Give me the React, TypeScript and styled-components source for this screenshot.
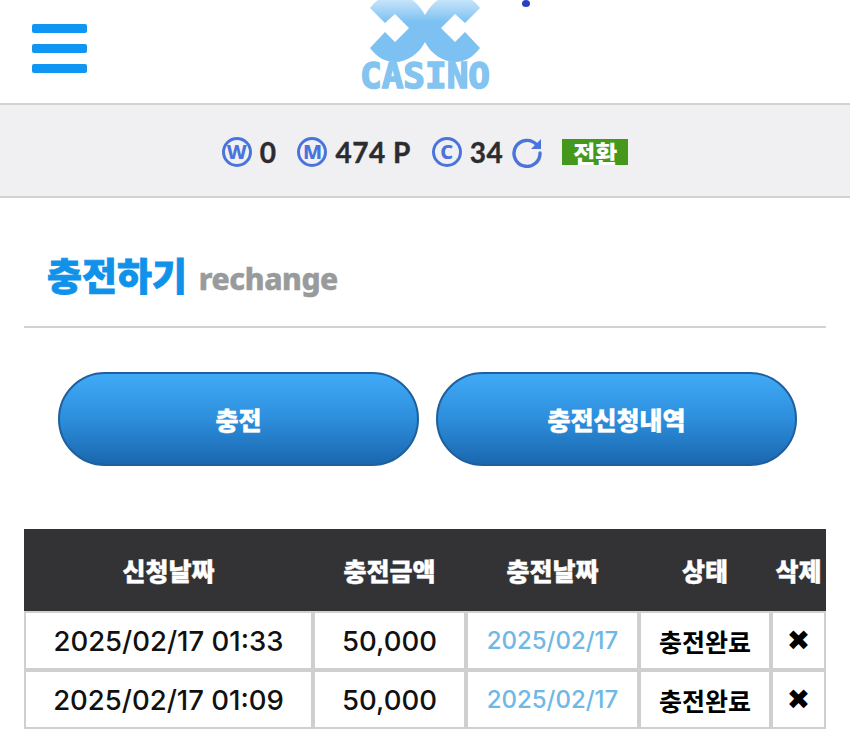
import React, { FC } from 'react'
import styled, { createGlobalStyle } from 'styled-components'

const KR = `"Noto Sans CJK KR", "Noto Sans", sans-serif`

const rows = [
    { requested: '2025/02/17 01:33', amount: '50,000', charged: '2025/02/17', status: '충전완료' },
    { requested: '2025/02/17 01:09', amount: '50,000', charged: '2025/02/17', status: '충전완료' },
]

const App: FC = () => {
    return (
        <Page>
            <GlobalStyle />
            <Header>
                <Burger>
                    <span />
                    <span />
                    <span />
                </Burger>
                <Logo>
                    <LogoMark viewBox="0 0 130 62">
                        <defs>
                            <linearGradient id="logoFill" gradientUnits="userSpaceOnUse" x1="0" y1="0" x2="0" y2="22">
                                <stop offset="0" stopColor="#c6e4fa" />
                                <stop offset="1" stopColor="#7cc1f1" />
                            </linearGradient>
                        </defs>
                        <path
                            id="logoHalf"
                            fill="url(#logoFill)"
                            d="M65 15C71 3 83 -6 95 -6C105 -6 113 -1 120 8L105 23L95 14L81 28L95 42L105 32L120 48C113 57 105 62 95 62C83 62 71 54 65 42Z"
                        />
                        <use href="#logoHalf" transform="matrix(-1 0 0 1 130 0)" />
                    </LogoMark>
                    <LogoText>CASINO</LogoText>
                </Logo>
                <Dot />
            </Header>

            <StatsBar>
                <Coin>W</Coin>
                <StatValue>0</StatValue>
                <Coin $gap={21}>M</Coin>
                <StatValue>474 P</StatValue>
                <Coin $gap={21}>C</Coin>
                <StatValue>34</StatValue>
                <RefreshIcon viewBox="0 0 32 32">
                    <path d="M25.5 8.5A13 13 0 1 0 29 17" fill="none" stroke="#4a74dc" strokeWidth="3.4" strokeLinecap="round" />
                    <path d="M30 3V13H20Z" fill="#4a74dc" />
                </RefreshIcon>
                <SwitchButton>전환</SwitchButton>
            </StatsBar>

            <TitleRow>
                <Title>충전하기</Title>
                <SubTitle>rechange</SubTitle>
            </TitleRow>

            <Tabs>
                <TabButton>충전</TabButton>
                <TabButton>충전신청내역</TabButton>
            </Tabs>

            <HistoryTable>
                <colgroup>
                    <col width={289} />
                    <col width={153} />
                    <col width={173} />
                    <col width={132} />
                    <col width={55} />
                </colgroup>
                <thead>
                    <tr>
                        <HeadCell>신청날짜</HeadCell>
                        <HeadCell>충전금액</HeadCell>
                        <HeadCell>충전날짜</HeadCell>
                        <HeadCell>상태</HeadCell>
                        <HeadCell>삭제</HeadCell>
                    </tr>
                </thead>
                <tbody>
                    {rows.map((row) => (
                        <tr key={row.requested}>
                            <Cell>{row.requested}</Cell>
                            <Cell>{row.amount}</Cell>
                            <DateCell>{row.charged}</DateCell>
                            <StatusCell>{row.status}</StatusCell>
                            <DeleteCell>✖</DeleteCell>
                        </tr>
                    ))}
                </tbody>
            </HistoryTable>
        </Page>
    )
}

export default App

const GlobalStyle = createGlobalStyle`
    html, body {
        margin: 0;
        padding: 0;
        background: #fff;
    }
`

const Page = styled.div`
    position: relative;
    width: 850px;
    height: 730px;
    overflow: hidden;
    background: #fff;
    font-family: ${KR};
`

const Header = styled.header`
    position: relative;
    display: flex;
    justify-content: center;
    box-sizing: border-box;
    height: 105px;
    border-bottom: 2px solid #d2d2d2;
`

const Burger = styled.div`
    position: absolute;
    left: 32px;
    top: 24px;
    display: flex;
    flex-direction: column;
    gap: 11px;
    width: 55px;

    span {
        display: block;
        height: 9px;
        border-radius: 2px;
        background: #0e96f2;
    }
`

const Logo = styled.div`
    display: flex;
    flex-direction: column;
    align-items: center;
    width: 130px;
`

const LogoMark = styled.svg`
    display: block;
    width: 130px;
    height: 62px;
`

const LogoText = styled.span`
    font-family: "DejaVu Sans Mono", monospace;
    font-weight: 700;
    font-size: 36px;
    line-height: 28px;
    color: #84c4f0;
    -webkit-text-stroke: 1.6px #84c4f0;
`

const Dot = styled.i`
    position: absolute;
    left: 522px;
    top: 0;
    width: 8px;
    height: 7px;
    border-radius: 50%;
    background: #2a3fc8;
`

const StatsBar = styled.div`
    display: flex;
    align-items: center;
    justify-content: center;
    box-sizing: border-box;
    height: 93px;
    padding-top: 3px;
    background: #f0f0f2;
    border-bottom: 2px solid #d2d2d2;
`

const Coin = styled.span<{ $gap?: number }>`
    display: flex;
    align-items: center;
    justify-content: center;
    box-sizing: border-box;
    width: 30px;
    height: 30px;
    margin-left: ${(p) => p.$gap ?? 0}px;
    margin-right: 8px;
    border: 3px solid #4a74dc;
    border-radius: 50%;
    color: #4a74dc;
    font-family: "Noto Sans", sans-serif;
    font-size: 20px;
    font-weight: 800;
    line-height: 1;
`

const StatValue = styled.span`
    font-family: Lato, "Noto Sans", sans-serif;
    font-size: 28px;
    font-weight: 700;
    letter-spacing: 0.5px;
    line-height: 1;
    color: #2c2c30;
    -webkit-text-stroke: 0.4px #2c2c30;
`

const RefreshIcon = styled.svg`
    width: 32px;
    height: 32px;
    margin-left: 8px;
`

const SwitchButton = styled.span`
    display: flex;
    align-items: center;
    justify-content: center;
    width: 66px;
    height: 26px;
    margin-left: 19px;
    padding-top: 1px;
    box-sizing: border-box;
    background: #46981c;
    color: #fff;
    font-size: 24px;
    font-weight: 900;
    line-height: 1;
`

const TitleRow = styled.div`
    display: flex;
    align-items: baseline;
    gap: 12px;
    box-sizing: border-box;
    height: 130px;
    margin: 0 24px;
    padding: 52px 0 0 23px;
    border-bottom: 2px solid #d2d2d2;
`

const Title = styled.h1`
    margin: 0;
    color: #1192ea;
    font-size: 38px;
    font-weight: 900;
    line-height: 48px;
    -webkit-text-stroke: 0.8px #1192ea;
`

const SubTitle = styled.span`
    color: #999a9c;
    font-family: "Noto Sans", sans-serif;
    font-size: 30px;
    font-weight: 800;
    letter-spacing: -0.4px;
    line-height: 48px;
    -webkit-text-stroke: 0.5px #999a9c;
`

const Tabs = styled.div`
    display: flex;
    gap: 17px;
    margin-top: 44px;
    padding-left: 58px;
`

const TabButton = styled.button`
    box-sizing: border-box;
    width: 361px;
    height: 94px;
    padding: 0;
    border: 2px solid #1e5f9e;
    border-radius: 47px;
    background: linear-gradient(180deg, #40aaf7 0%, #2d8edc 50%, #1a67ae 100%);
    color: #fff;
    font-family: ${KR};
    font-size: 25px;
    font-weight: 900;
    -webkit-text-stroke: 0.4px #fff;
`

const HistoryTable = styled.table`
    width: 802px;
    margin: 63px 0 0 24px;
    border-collapse: separate;
    border-spacing: 0;
    table-layout: fixed;
`

const HeadCell = styled.th`
    height: 82px;
    padding: 0;
    background: #333335;
    color: #fff;
    font-size: 25px;
    font-weight: 900;
    white-space: nowrap;
    -webkit-text-stroke: 0.4px #fff;
`

const Cell = styled.td`
    box-sizing: border-box;
    height: 59px;
    padding: 0;
    border: 2px solid #cfcfcf;
    background: #fff;
    color: #111;
    font-family: Inter, "Noto Sans", sans-serif;
    font-size: 27.5px;
    font-weight: 500;
    text-align: center;
    white-space: nowrap;
`

const DateCell = styled(Cell)`
    color: #6fb8e6;
    font-size: 24px;
`

const StatusCell = styled(Cell)`
    font-family: ${KR};
    font-size: 25px;
    font-weight: 700;
    color: #000;
`

const DeleteCell = styled(Cell)`
    font-family: "DejaVu Sans", sans-serif;
    font-size: 28px;
    color: #000;
`
